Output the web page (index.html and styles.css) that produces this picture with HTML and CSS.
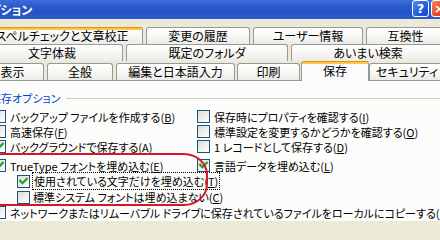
FILE: index.html
```html
<!DOCTYPE html>
<html lang="ja">
<head>
<meta charset="utf-8">
<title>オプション</title>
<link rel="stylesheet" href="styles.css">
</head>
<body>
<div class="window">
  <div class="titlebar">
    <span class="title">オプション</span>
    <div class="caption-buttons">
      <span class="cap-btn help">?</span>
      <span class="cap-btn close">×</span>
    </div>
  </div>
  <div class="tabs">
    <div class="tabrow">
      <span class="tab hot t-spell">スペルチェックと文章校正</span>
      <span class="tab t-hist">変更の履歴</span>
      <span class="tab t-user">ユーザー情報</span>
      <span class="tab t-compat">互換性</span>
    </div>
    <div class="tabrow">
      <span class="tab t-moji">文字体裁</span>
      <span class="tab t-folder">既定のフォルダ</span>
      <span class="tab t-fuzzy">あいまい検索</span>
    </div>
    <div class="tabrow front">
      <span class="tab t-view">表示</span>
      <span class="tab t-gen">全般</span>
      <span class="tab t-edit">編集と日本語入力</span>
      <span class="tab t-print">印刷</span>
      <span class="tab selected t-save">保存</span>
      <span class="tab t-sec">セキュリティ</span>
    </div>
  </div>
  <div class="panel">
    <div class="legend"><span class="legend-text">保存オプション</span><span class="rule"></span></div>
    <div class="grid">
      <div class="opt"><span class="cb"></span><span>バックアップ ファイルを作成する(<u>B</u>)</span></div>
      <div class="opt"><span class="cb"></span><span>保存時にプロパティを確認する(<u>I</u>)</span></div>
      <div class="opt"><span class="cb"></span><span>高速保存(<u>F</u>)</span></div>
      <div class="opt"><span class="cb"></span><span>標準設定を変更するかどうかを確認する(<u>O</u>)</span></div>
      <div class="opt"><span class="cb checked"><svg viewBox="0 0 11 11"><path d="M2.2 4.8 L4.4 7.2 L8.8 2.8"/></svg></span><span>バックグラウンドで保存する(<u>A</u>)</span></div>
      <div class="opt"><span class="cb"></span><span>1 レコードとして保存する(<u>D</u>)</span></div>
    </div>
    <div class="grid embed">
      <div class="opt"><span class="cb checked"><svg viewBox="0 0 11 11"><path d="M2.2 4.8 L4.4 7.2 L8.8 2.8"/></svg></span><span>TrueType フォントを埋め込む(<u>E</u>)</span></div>
      <div class="opt"><span class="cb checked"><svg viewBox="0 0 11 11"><path d="M2.2 4.8 L4.4 7.2 L8.8 2.8"/></svg></span><span>言語データを埋め込む(<u>L</u>)</span></div>
    </div>
    <div class="opt sub"><span class="cb checked"><svg viewBox="0 0 11 11"><path d="M2.2 4.8 L4.4 7.2 L8.8 2.8"/></svg></span><span class="focus">使用されている文字だけを埋め込む(<u>T</u>)</span></div>
    <div class="opt sub"><span class="cb"></span><span>標準システム フォントは埋め込まない(<u>C</u>)</span></div>
    <div class="opt"><span class="cb"></span><span>ネットワークまたはリムーバブル ドライブに保存されているファイルをローカルにコピーする(<u>N</u>)</span></div>
    <div class="annotation"></div>
  </div>
</div>
</body>
</html>
```
FILE: styles.css
```css
html, body {
  margin: 0;
  padding: 0;
}
body {
  width: 440px;
  height: 221px;
  overflow: hidden;
  background: #ECE9D8;
  font-family: "Noto Sans CJK JP", "Noto Sans", sans-serif;
  font-feature-settings: "palt";
  color: #000;
}
.window {
  width: 440px;
  height: 221px;
  overflow: hidden;
}
.titlebar {
  height: 19px;
  display: flex;
  justify-content: space-between;
  align-items: flex-start;
  background: linear-gradient(#3B6FDA 0%, #2A5ACB 35%, #2553C6 70%, #2B5DCB 100%);
  overflow: hidden;
}
.title {
  color: #fff;
  font-weight: bold;
  font-size: 12px;
  line-height: 19px;
  margin-left: -22px;
  white-space: nowrap;
}
.caption-buttons {
  display: flex;
  gap: 2px;
  margin-right: -8px;
}
.cap-btn {
  width: 17px;
  height: 17px;
  box-sizing: border-box;
  border: 1px solid #fff;
  border-radius: 3px;
  color: #fff;
  font-family: "DejaVu Sans", sans-serif;
  font-weight: bold;
  font-size: 13px;
  line-height: 15px;
  text-align: center;
}
.help {
  background: linear-gradient(135deg, #5A8BF0, #2159DC 60%, #1A4BC4);
}
.close {
  background: linear-gradient(135deg, #F08A66, #E04A1F 60%, #C8381A);
}
.tabs {
  margin-left: -19px;
  width: 470px;
  padding-top: 8px;
}
.tabrow {
  display: flex;
  gap: 3px;
  height: 17px;
}
.tab {
  box-sizing: border-box;
  height: 17px;
  flex: none;
  border: 1px solid #919B9C;
  border-bottom: none;
  border-radius: 3px 3px 0 0;
  background: linear-gradient(#FFFFFF 0%, #F7F7F4 50%, #ECEBE6 100%);
  font-size: 12px;
  line-height: 15px;
  text-align: center;
  white-space: nowrap;
  overflow: hidden;
}
.tab.hot {
  border-top: none;
  background:
    linear-gradient(#E68B2C 0, #E68B2C 1px, #FFC73C 1px, #FFC73C 3px, transparent 3px),
    linear-gradient(#FFFFFF 0%, #F7F7F4 50%, #ECEBE6 100%);
  line-height: 17px;
}
.t-spell { width: 162px; }
.t-hist { width: 104px; }
.t-user { width: 110px; }
.t-compat { width: 79px; }
.t-moji { width: 142px; }
.t-folder { width: 162px; }
.t-fuzzy { width: 154px; }
.tabrow.front {
  height: 19px;
  align-items: flex-end;
  gap: 0;
}
.t-view { width: 63px; margin-right: 3px; }
.t-gen { width: 66px; margin-right: 3px; }
.t-edit { width: 119px; margin-right: 2px; }
.t-print { width: 63px; margin-right: 1px; }
.t-save { width: 68px; }
.t-sec { width: 76px; }
.tab.selected {
  height: 20px;
  margin-bottom: -1px;
  position: relative;
  z-index: 1;
  border-top: none;
  background:
    linear-gradient(#E68B2C 0, #E68B2C 1px, #FFC73C 1px, #FFC73C 3px, #FCFCFE 3px);
  line-height: 20px;
}
.panel {
  position: relative;
  border-top: 1px solid #919B9C;
  background: #FCFCFA;
  height: 160px;
  margin-left: -7px;
  padding-top: 10px;
  box-sizing: border-box;
  font-size: 11px;
}
.legend {
  display: flex;
  align-items: center;
  height: 14px;
  margin-left: -3px;
}
.legend-text {
  color: #0046D5;
  white-space: nowrap;
}
.rule {
  flex: 1;
  border-top: 1px solid #D0D0BF;
  margin-left: 6px;
}
.grid {
  display: grid;
  grid-template-columns: 204px 1fr;
  margin-top: 4px;
}
.grid.embed {
  margin-top: 4px;
}
.opt {
  display: flex;
  align-items: center;
  height: 15px;
  gap: 4px;
  white-space: nowrap;
}
.opt.sub {
  height: 16px;
  margin-left: 24px;
  gap: 3px;
}
.cb {
  flex: none;
  width: 13px;
  height: 13px;
  box-sizing: border-box;
  border: 1px solid #1C5180;
  background: linear-gradient(135deg, #DCDCD7, #FFFFFF);
  display: flex;
  align-items: center;
  justify-content: center;
}
.cb svg {
  width: 11px;
  height: 11px;
  display: block;
}
.cb svg path {
  fill: none;
  stroke: #21A121;
  stroke-width: 2.2;
  stroke-linecap: square;
  stroke-linejoin: miter;
}
.focus {
  outline: 1px dotted #000;
  outline-offset: 0;
  padding: 0 1px;
}
u {
  text-decoration-thickness: 1px;
  text-underline-offset: 1px;
}
.annotation {
  position: absolute;
  left: -14px;
  top: 72px;
  width: 229px;
  height: 53px;
  box-sizing: border-box;
  border: 2px solid #D5152E;
  border-radius: 24px / 22px;
  pointer-events: none;
}
```
